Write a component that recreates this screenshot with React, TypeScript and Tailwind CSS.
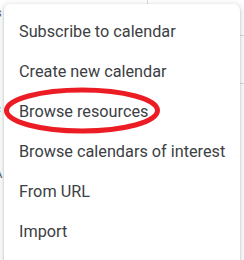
import React from "react";

const ITEMS = [
  "Subscribe to calendar",
  "Create new calendar",
  "Browse resources",
  "Browse calendars of interest",
  "From URL",
  "Import",
];

export default function App() {
  return (
    <div className="relative w-[244px] h-[260px] overflow-hidden bg-white font-['Roboto',sans-serif]">
      {/* page behind the menu */}
      <div className="absolute left-[147px] top-0 h-[6px] w-px bg-[#dadce0]" />
      <div className="absolute right-0 top-[35px] h-px w-[6px] bg-[#dadce0]" />
      <div className="absolute right-0 top-[83px] h-px w-[6px] bg-[#dadce0]" />
      <span className="absolute left-[-5px] top-[3px] text-[13px] text-[#5f6368]">s</span>
      <span className="absolute left-[-6px] top-[99px] text-[13px] text-[#5f6368]">c</span>
      <span className="absolute left-[-6px] top-[164px] text-[13px] text-[#5f6368]">A</span>

      <div className="absolute left-[4px] top-[4px] w-[236px] h-[270px] rounded-[6px] bg-white pt-[8px] shadow-[0_2px_6px_2px_rgba(60,64,67,0.15),0_1px_2px_rgba(60,64,67,0.3)]">
        {ITEMS.map((item) => (
          <div key={item} className="flex h-10 items-center whitespace-nowrap px-[15px] text-[16.25px] text-[#3c4043]">
            {item}
          </div>
        ))}
      </div>

      <svg className="absolute left-0 top-0" width="244" height="260" viewBox="0 0 244 260">
        <ellipse cx="82" cy="110.5" rx="75.5" ry="20.5" fill="none" stroke="#ec1c24" strokeWidth="5" />
      </svg>
    </div>
  );
}
